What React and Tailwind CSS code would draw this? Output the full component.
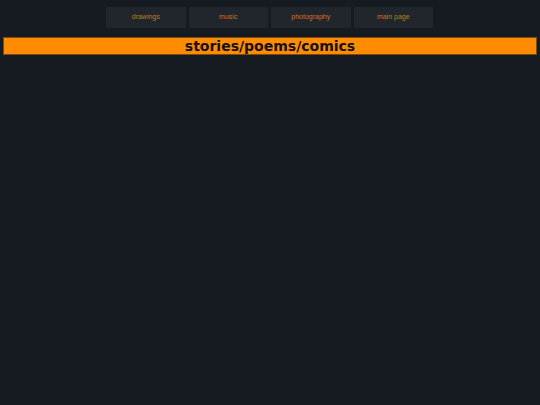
export default function App() {
  const links = ["drawings", "music", "photography", "main page"];

  return (
    <div className="min-h-[405px] bg-[#161b22] pt-[7px] px-[3px]">
      <nav className="flex justify-center gap-[3px] pr-[1px]">
        {links.map((l) => (
          <a
            key={l}
            href="#"
            className="w-[79.5px] h-[21px] flex items-center justify-center bg-[#21262d] text-[#c17a1c] text-[7px]"
            style={{ fontFamily: '"Liberation Sans", Arial, sans-serif' }}
          >
            {l}
          </a>
        ))}
      </nav>
      <h1
        className="mt-[9px] h-[18px] flex items-center justify-center bg-[#ff8c00] border border-[#7a4a10] text-[#111] text-[14px] font-bold leading-none"
        style={{ fontFamily: '"DejaVu Sans", Verdana, sans-serif' }}
      >
        stories/poems/comics
      </h1>
    </div>
  );
}
